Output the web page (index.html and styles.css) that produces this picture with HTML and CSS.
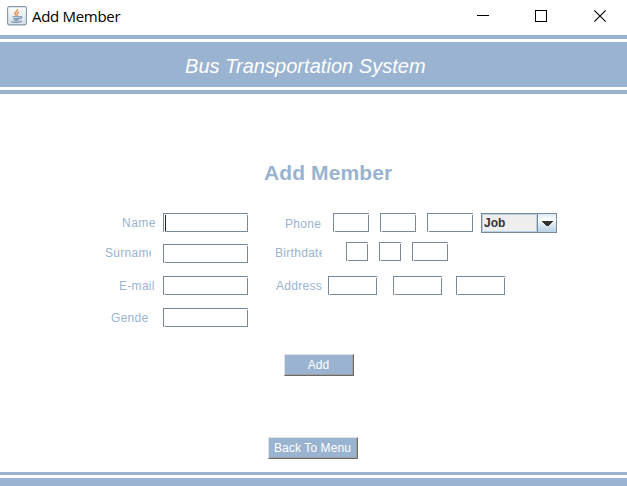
FILE: index.html
```html
<!DOCTYPE html>
<html lang="en">
<head>
<meta charset="utf-8">
<title>Add Member</title>
<link rel="stylesheet" href="styles.css">
</head>
<body>
<div class="window">
  <header class="titlebar">
    <svg class="app-icon" width="20" height="20" viewBox="0 0 20 20">
      <defs><linearGradient id="tile" x1="0" y1="0" x2="0" y2="1"><stop offset="0" stop-color="#fff"/><stop offset="1" stop-color="#d5dfe7"/></linearGradient></defs>
      <rect x=".6" y=".6" width="18.8" height="18.3" rx="1.6" fill="url(#tile)" stroke="#8498a8" stroke-width="1.1"/>
      <path d="M10.600 3C11.200 5 7.500 5.700 7.800 7.600 8 8.700 8.800 9.100 9.200 9.800M12.200 5.800C9.800 6.900 9.600 7.800 10.500 9.700" fill="none" stroke="#e88b42" stroke-width="1.300"/>
      <path d="M5.500 10.800H13M6.300 12.400Q9 13.300 12.300 12.400M6.800 14Q9 14.800 12 14M13 10.700C15.800 10.100 15 12.600 12.700 12.900M4.500 15.200C3.500 16.700 12.500 16.700 15 15.300" fill="none" stroke="#6c8caa" stroke-width="1.100"/>
    </svg>
    <span class="window-title">Add Member</span>
    <svg class="controls" width="132" height="14" viewBox="0 0 132 14" fill="none" stroke="#000">
      <path d="M0 6.500H12M58.500 1.500H69.500V12.500H58.500Z" shape-rendering="crispEdges"/>
      <path d="M117.300 1.300 128.700 12.700M128.700 1.300 117.300 12.700" stroke-width="1.100"/>
    </svg>
  </header>
  <div class="banner"><h1>Bus Transportation System</h1></div>
  <main>
    <h2>Add Member</h2>
    <form>
      <div class="column left">
        <div class="row"><label class="name">Name</label><span class="field focused"></span></div>
        <div class="row"><label class="surname">Surname</label><span class="field"></span></div>
        <div class="row"><label class="email">E-mail</label><span class="field"></span></div>
        <div class="row"><label class="gender">Gender</label><span class="field"></span></div>
      </div>
      <div class="column right">
        <div class="row phone"><label>Phone</label><span class="field"></span><span class="field"></span><span class="field wide"></span>
          <div class="combo"><span class="value">Job</span><span class="arrow"><svg width="11" height="6" viewBox="0 0 11 6"><path d="M0 0H11V1H10V2H9V3H8V4H7V5H4V4H3V3H2V2H1V1H0Z" fill="#333" shape-rendering="crispEdges"/></svg></span></div>
        </div>
        <div class="row birth"><label>Birthdate</label><span class="field"></span><span class="field"></span><span class="field year"></span></div>
        <div class="row address"><label>Address</label><span class="field"></span><span class="field"></span><span class="field"></span></div>
      </div>
    </form>
    <div class="button add">Add</div>
    <div class="button back">Back To Menu</div>
  </main>
  <footer></footer>
</div>
</body>
</html>
```
FILE: styles.css
```css
* { box-sizing: border-box; }
body {
  margin: 0;
  background: #fff;
  font-family: "Liberation Sans", Arial, sans-serif;
  font-size: 12px;
  color: #99b3d0;
}
.window { width: 627px; height: 486px; display: flex; flex-direction: column; overflow: hidden; }
.titlebar { height: 35px; flex: none; display: flex; align-items: flex-start; padding: 6px 18px 0 7px; color: #000; }
.app-icon { flex: none; }
.window-title {
  font: 15px/20px "Open Sans", "Noto Sans", sans-serif;
  margin-left: 5px;
  letter-spacing: -0.3px;
  white-space: nowrap;
}
.controls { margin: 3px 0 0 auto; }
.banner {
  flex: none;
  height: 59px;
  border-top: 4px solid #99b3d0;
  border-bottom: 4px solid #99b3d0;
  padding: 3px 0;
}
h1 {
  margin: 0;
  height: 45px;
  background: #99b3d0;
  color: #fff;
  font: italic 20px/49px "Liberation Sans", Arial, sans-serif;
  padding-left: 185px;
  letter-spacing: 0.04px;
  white-space: nowrap;
}
main { flex: 1; display: flex; flex-direction: column; align-items: flex-start; }
h2 { margin: 67px 0 0 264px; font-size: 21px; line-height: 24px; letter-spacing: 0.1px; white-space: nowrap; }
form { display: flex; margin-top: 28px; height: 114px; }
.column { display: flex; flex-direction: column; }
.left { width: 248px; padding-left: 105px; }
.left .row { margin-bottom: 13px; }
.left .row:first-child { margin-bottom: 12px; }
.left .field { width: 85px; margin-left: auto; }
.row { display: flex; height: 19px; }
label { line-height: 21px; height: 21px; letter-spacing: 0.3px; white-space: nowrap; overflow: hidden; }
.name { margin-left: 17px; letter-spacing: 0.5px; }
.surname { width: 46px; line-height: 19px; }
.email { margin-left: 14px; }
.gender { margin-left: 6px; width: 37px; }
.field {
  height: 19px;
  flex: none;
  background:
    linear-gradient(#7a8a99, #7a8a99) 0 0 / 100% 1px no-repeat,
    linear-gradient(#7a8a99, #7a8a99) 0 0 / 1px 100% no-repeat,
    linear-gradient(#7a8a99, #7a8a99) 2px 100% / 100% 1px no-repeat,
    linear-gradient(#7a8a99, #7a8a99) 100% 2px / 1px 100% no-repeat,
    #fff;
}
.focused::before { content: ""; display: block; width: 1px; height: 16px; margin: 2px 0 0 2px; background: #222; }
.right { padding-left: 27px; }
.right label { width: 47px; margin-right: 1px; flex: none; }
.phone { margin-bottom: 10px; }
.phone label { margin: 1px 1px 0 10px; }
.phone .field { width: 36px; margin-left: 11px; }
.phone label + .field { margin-left: 0; }
.phone .wide { width: 46px; }
.birth label { margin-top: 1px; }
.birth label + .field { margin-left: 23px; }
.birth .field { width: 22px; margin-left: 11px; }
.birth .year { width: 36px; }
.address { margin-top: 15px; }
.address label { margin-left: 1px; }
.address .field { width: 49px; }
.address label + .field { margin: 0 16px 0 4px; }
.address .field:last-child { margin-left: 14px; }
.combo { width: 76px; height: 20px; margin-left: 8px; display: flex; border: 1px solid #7a8a99; }
.value {
  width: 55px;
  border: 1px solid #b8cfe5;
  background: #eee;
  color: #333;
  font-weight: bold;
  line-height: 17px;
  padding-left: 1px;
}
.arrow {
  width: 19px;
  border-left: 1px solid #7a8a99;
  background: linear-gradient(#dde8f3 0, #fff 30%, #dde8f3 60%, #b8cfe5 100%);
  display: flex;
  justify-content: center;
  padding-top: 7px;
}
.button {
  height: 22px;
  background: #99b3d0;
  color: #fff;
  border: 1px solid;
  border-color: #e3e3e3 #696969 #696969 #e3e3e3;
  box-shadow: inset -1px -1px #a0a0a0;
  line-height: 20px;
  text-align: center;
  white-space: nowrap;
}
.add { width: 70px; margin: 27px 0 0 284px; padding-right: 1px; }
.back { width: 90px; margin: 61px 0 0 268px; padding-right: 1px; letter-spacing: 0.1px; }
footer { flex: none; height: 14px; border-top: 3px solid #99b3d0; border-bottom: 8px solid #99b3d0; }
```
